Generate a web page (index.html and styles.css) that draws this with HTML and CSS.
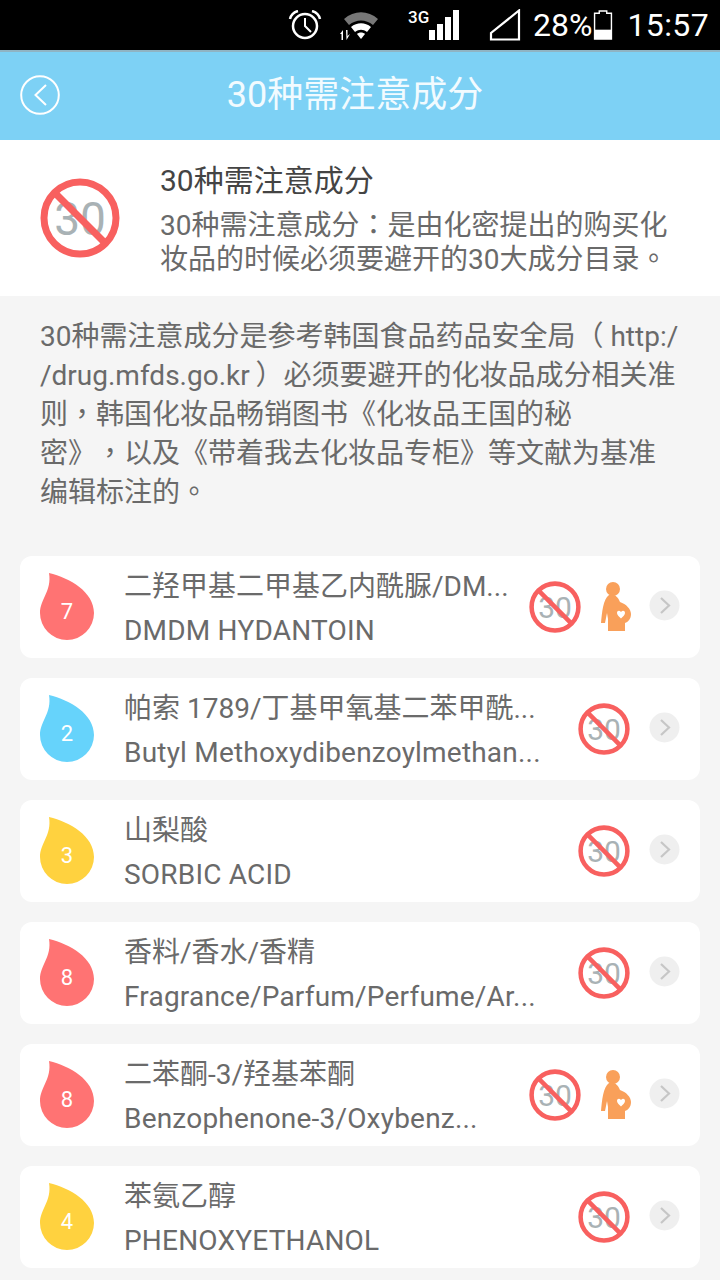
FILE: index.html
```html
<!DOCTYPE html>
<html lang="zh">
<head>
<meta charset="utf-8">
<title>30种需注意成分</title>
<link rel="stylesheet" href="styles.css">
</head>
<body>
<svg class="defs" aria-hidden="true">
  <symbol id="ban" viewBox="0 0 80 80">
    <text x="40" y="57" text-anchor="middle" class="ban-text">30</text>
    <circle cx="40" cy="40" r="36" fill="none" stroke="#f8605f" stroke-width="7"/>
    <line x1="14.500" y1="14.500" x2="65.500" y2="65.500" stroke="#f8605f" stroke-width="7"/>
  </symbol>
  <symbol id="drop" viewBox="0 0 54 67">
    <path d="M9 0C30 5 54 19 54 40A27 27 0 0 1 0 40C0 26 12 18 9 0Z"/>
  </symbol>
  <symbol id="preg" viewBox="0 0 32 50">
    <circle cx="13" cy="7" r="7" fill="#f9a05a"/>
    <path d="M9 13C14 11 18 15 20 20C26 22 31 27 31 32C31 37 28 40 25 41V49H8V37L7 31L5 41H1C2 31 3 17 9 13Z" fill="#f9a05a"/>
    <path d="M21 30C22.500 28 25 28.500 25 31C25 33 22.500 35 21 36.500C19.500 35 17 33 17 31C17 28.500 19.500 28 21 30Z" fill="#fff"/>
  </symbol>
  <symbol id="chev" viewBox="0 0 31 31">
    <circle cx="15.500" cy="15.500" r="15" fill="#efefef"/>
    <path d="M12 8L20 15.500L12 23" fill="none" stroke="#c6c6c6" stroke-width="2.200"/>
  </symbol>
</svg>

<div class="status">
  <svg class="st-alarm" viewBox="0 0 34 30"><circle cx="17" cy="16" r="12" fill="none" stroke="#fff" stroke-width="2.500"/><path d="M17 8V16L23 22" fill="none" stroke="#fff" stroke-width="2"/><path d="M2 9C3 5 6 2 10 1M32 9C31 5 28 2 24 1" fill="none" stroke="#fff" stroke-width="2.500"/></svg>
  <svg class="st-wifi" viewBox="0 0 44 30"><path d="M5 9C15 0 29 0 39 9L34 15C27 9 17 9 10 15Z" fill="#777"/><path d="M12 17C18 12 26 12 32 17L28 22C24 19 20 19 16 22Z" fill="#fff"/><path d="M18 24C20 22 24 22 26 24L22 29Z" fill="#fff"/><path d="M1 24L4 20V30H2.500V24ZM7 20H8.500V26L11 24L7.500 30Z" fill="#fff"/></svg>
  <div class="st-net"><span class="st-3g">3G</span>
    <div class="st-bars"><i class="b1"></i><i class="b2"></i><i class="b3"></i><i class="b4"></i></div>
  </div>
  <svg class="st-sim" viewBox="0 0 32 32"><path d="M30 1.500V30.500H2V24Z" fill="none" stroke="#fff" stroke-width="2.200"/></svg>
  <span class="st-pct">28%</span>
  <svg class="st-batt" viewBox="0 0 20 32"><path d="M6 3.500V1H14V3.500H19V31H1V3.500Z" fill="none" stroke="#fff" stroke-width="1.500"/><rect x="1" y="21" width="18" height="10" fill="#fff"/></svg>
  <span class="st-time">15:57</span>
</div>

<header class="bar">
  <svg class="back" viewBox="0 0 40 40"><circle cx="20" cy="20" r="18.800" fill="none" stroke="#fff" stroke-width="2"/><path d="M26 10L15.500 20L26 30" fill="none" stroke="#fff" stroke-width="2"/></svg>
  <h1 class="bar-title">30种需注意成分</h1>
</header>

<section class="intro">
  <svg class="intro-ban"><use href="#ban"/></svg>
  <div class="intro-text">
    <h2 class="intro-title">30种需注意成分</h2>
    <p class="intro-desc">30种需注意成分<span class="punc" lang="zh-Hant">：</span>是由化密提出的购买化<br>妆品的时候必须要避开的30大成分目录<span class="punc" lang="zh-Hant">。</span></p>
  </div>
</section>

<p class="note">30种需注意成分是参考韩国食品药品安全局（ http:/<br>/drug.mfds.go.kr&#8201;）必须要避开的化妆品成分相关准<br>则<span class="punc" lang="zh-Hant">，</span>韩国化妆品畅销图书《化妆品王国的秘<br>密》<span class="punc" lang="zh-Hant">，</span>以及《带着我去化妆品专柜》等文献为基准<br>编辑标注的<span class="punc" lang="zh-Hant">。</span></p>

<main class="list">
  <article class="row">
    <div class="drop red"><svg><use href="#drop"/></svg><span>7</span></div>
    <div class="names"><div class="cn">二羟甲基二甲基乙内酰脲/DM...</div><div class="en">DMDM HYDANTOIN</div></div>
    <svg class="ban"><use href="#ban"/></svg><svg class="preg"><use href="#preg"/></svg><svg class="chev"><use href="#chev"/></svg>
  </article>
  <article class="row">
    <div class="drop blue"><svg><use href="#drop"/></svg><span>2</span></div>
    <div class="names"><div class="cn">帕索 1789/丁基甲氧基二苯甲酰...</div><div class="en">Butyl Methoxydibenzoylmethan...</div></div>
    <svg class="ban"><use href="#ban"/></svg><svg class="chev"><use href="#chev"/></svg>
  </article>
  <article class="row">
    <div class="drop yellow"><svg><use href="#drop"/></svg><span>3</span></div>
    <div class="names"><div class="cn">山梨酸</div><div class="en">SORBIC ACID</div></div>
    <svg class="ban"><use href="#ban"/></svg><svg class="chev"><use href="#chev"/></svg>
  </article>
  <article class="row">
    <div class="drop red"><svg><use href="#drop"/></svg><span>8</span></div>
    <div class="names"><div class="cn">香料/香水/香精</div><div class="en">Fragrance/Parfum/Perfume/Ar...</div></div>
    <svg class="ban"><use href="#ban"/></svg><svg class="chev"><use href="#chev"/></svg>
  </article>
  <article class="row">
    <div class="drop red"><svg><use href="#drop"/></svg><span>8</span></div>
    <div class="names"><div class="cn">二苯酮-3/羟基苯酮</div><div class="en">Benzophenone-3/Oxybenz...</div></div>
    <svg class="ban"><use href="#ban"/></svg><svg class="preg"><use href="#preg"/></svg><svg class="chev"><use href="#chev"/></svg>
  </article>
  <article class="row">
    <div class="drop yellow"><svg><use href="#drop"/></svg><span>4</span></div>
    <div class="names"><div class="cn">苯氨乙醇</div><div class="en">PHENOXYETHANOL</div></div>
    <svg class="ban"><use href="#ban"/></svg><svg class="chev"><use href="#chev"/></svg>
  </article>
</main>
</body>
</html>
```
FILE: styles.css
```css
* { box-sizing: border-box; margin: 0; padding: 0; }
html, body { width: 720px; height: 1280px; overflow: hidden; }
body {
  background: #f5f5f5;
  font-family: Roboto, "Noto Sans CJK SC", sans-serif;
  color: #6a6a6a;
  text-spacing-trim: space-all;
}
.defs { position: absolute; width: 0; height: 0; }
.ban-text { font: 46px Roboto, sans-serif; fill: #a9b2b5; }
.punc { font-family: "Noto Sans CJK TC", sans-serif; line-height: 0; }

.status {
  height: 50px;
  background: #000;
  color: #fff;
  display: flex;
  align-items: center;
  padding-left: 288px;
}
.st-alarm { width: 34px; height: 30px; }
.st-wifi { width: 44px; height: 30px; margin-left: 17px; }
.st-net { display: flex; align-items: flex-end; height: 30px; margin-left: 25px; width: 56px; position: relative; }
.st-3g { position: absolute; left: 0; top: -3px; font-size: 17px; font-weight: 500; line-height: 20px; }
.st-bars { display: flex; align-items: flex-end; gap: 2px; margin-left: 21px; }
.st-bars i { display: block; width: 6px; background: #fff; }
.b1 { height: 10px; }
.b2 { height: 16px; }
.b3 { height: 23px; }
.b4 { height: 30px; }
.st-sim { width: 32px; height: 32px; margin-left: 25px; }
.st-pct { font-size: 32px; margin-left: 12px; line-height: 1; }
.st-batt { width: 20px; height: 30px; margin-left: 1px; }
.st-time { font-size: 32px; margin-left: 14px; line-height: 1; letter-spacing: 0.4px; }

.bar {
  height: 90px;
  background: #7dd1f5;
  border-top: 2px solid #8fb4c4;
  display: flex;
  align-items: center;
  position: relative;
  padding: 0 0 2px 20px;
}
.back { width: 40px; height: 40px; }
.bar-title {
  position: absolute;
  left: 0; right: 10px;
  top: 18px;
  text-align: center;
  font-size: 36px;
  line-height: 50px;
  font-weight: 400;
  color: #f2fbff;
}

.intro {
  height: 156px;
  background: #fff;
  display: flex;
  align-items: center;
  padding: 0 40px;
}
.intro-ban { width: 80px; height: 80px; flex: none; margin-right: 40px; }
.intro-text { padding-top: 1px; }
.intro-title { font-size: 30px; font-weight: 400; color: #444; line-height: 40px; }
.intro-desc { font-size: 28px; line-height: 34px; color: #6a6a6a; margin-top: 8px; }

.note {
  font-size: 28px;
  line-height: 39px;
  padding: 21px 0 0 40px;
  height: 260px;
  white-space: nowrap;
}

.list { display: flex; flex-direction: column; gap: 20px; padding: 0 20px; }
.row {
  height: 102px;
  background: #fff;
  border-radius: 12px;
  display: flex;
  align-items: center;
  padding: 0 20px;
}
.drop { position: relative; width: 54px; height: 67px; flex: none; margin-top: -2px; }
.drop svg { display: block; width: 54px; height: 67px; }
.drop span {
  position: absolute;
  left: 0; right: 0; top: 24px;
  text-align: center;
  font-size: 22px;
  line-height: 30px;
  color: #fff;
}
.red svg { fill: #ff7373; }
.blue svg { fill: #66d3fb; }
.yellow svg { fill: #ffd23f; }
.names { flex: 1; min-width: 0; margin-left: 30px; padding-top: 4px; }
.cn { font-size: 28px; line-height: 44px; white-space: nowrap; }
.en { font-size: 28px; line-height: 44px; white-space: nowrap; letter-spacing: 0.2px; }
.ban { width: 52px; height: 52px; flex: none; }
.preg { width: 32px; height: 50px; flex: none; margin: 0 -2px 0 19px; }
.chev { width: 31px; height: 31px; flex: none; margin: -3px 0 0 19px; }
```
